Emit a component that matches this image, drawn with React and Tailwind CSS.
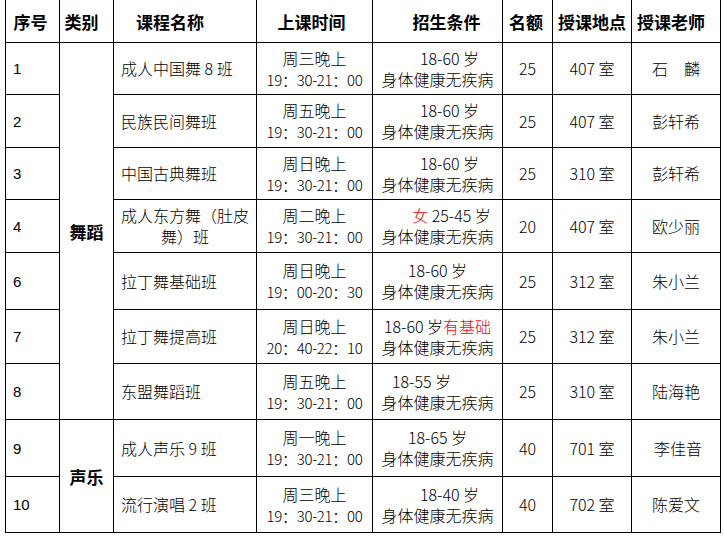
import React from "react";

const rows = [
  { no: "1", name: "成人中国舞 8 班", day: "周三晚上", time: "19：30-21：00", age: "18-60 岁", shift: "pl-[24px]", n: "25", room: "407 室", teacher: "石　麟", h: "h-[52px]" },
  { no: "2", name: "民族民间舞班", day: "周五晚上", time: "19：30-21：00", age: "18-60 岁", shift: "pl-[24px]", n: "25", room: "407 室", teacher: "彭轩希", h: "h-[53px]" },
  { no: "3", name: "中国古典舞班", day: "周日晚上", time: "19：30-21：00", age: "18-60 岁", shift: "pl-[24px]", n: "25", room: "310 室", teacher: "彭轩希", h: "h-[52px]" },
  { no: "4", name: "成人东方舞（肚皮舞）班", center: true, day: "周二晚上", time: "19：30-21：00", red: "女", age: " 25-45 岁", shift: "pl-[28px]", n: "20", room: "407 室", teacher: "欧少丽", h: "h-[53px]" },
  { no: "6", name: "拉丁舞基础班", day: "周日晚上", time: "19：00-20：30", age: "18-60 岁", shift: "", n: "25", room: "312 室", teacher: "朱小兰", h: "h-[57px]" },
  { no: "7", name: "拉丁舞提高班", day: "周日晚上", time: "20：40-22：10", age: "18-60 岁", after: "有基础", shift: "", n: "25", room: "312 室", teacher: "朱小兰", h: "h-[54px]" },
  { no: "8", name: "东盟舞蹈班", day: "周五晚上", time: "19：30-21：00", age: "18-55 岁", shift: "pr-[32px]", n: "25", room: "310 室", teacher: "陆海艳", h: "h-[56px]" },
  { no: "9", name: "成人声乐 9 班", day: "周一晚上", time: "19：30-21：00", age: "18-65 岁", shift: "", n: "40", room: "701 室", teacher: "李佳音", h: "h-[57px]" },
  { no: "10", name: "流行演唱 2 班", day: "周三晚上", time: "19：30-21：00", age: "18-40 岁", shift: "pl-[24px]", n: "40", room: "702 室", teacher: "陈爱文", h: "h-[56px]" },
];

const cell = "border border-black align-middle p-0";

export default function App() {
  return (
    <div className="bg-white w-[724px] h-[537px] overflow-hidden pl-[5px] text-black" style={{ fontFamily: '"Noto Sans CJK SC", sans-serif' }}>
      <table className="table-fixed border-collapse w-[716px] -mt-[1px] text-[16px] leading-[21px] font-light">
        <colgroup>
          <col className="w-[54px]" />
          <col className="w-[54px]" />
          <col className="w-[143px]" />
          <col className="w-[116px]" />
          <col className="w-[130px]" />
          <col className="w-[50px]" />
          <col className="w-[79px]" />
          <col className="w-[89px]" />
        </colgroup>
        <thead>
          <tr className="h-[43px] font-bold text-[17px]">
            <th className={`${cell} pr-[4px]`}>序号</th>
            <th className={`${cell} pr-[10px]`}>类别</th>
            <th className={`${cell} text-left pl-[22px]`}>课程名称</th>
            <th className={`${cell} pr-[6px]`}>上课时间</th>
            <th className={`${cell} pl-[18px]`}>招生条件</th>
            <th className={`${cell} pr-[3px]`}>名额</th>
            <th className={cell}>授课地点</th>
            <th className={`${cell} pr-[10px]`}>授课老师</th>
          </tr>
        </thead>
        <tbody>
          {rows.map((r, i) => (
            <tr key={r.no} className={r.h}>
              <td className={`${cell} pl-[7px] text-[15px] font-normal`} style={{ fontFamily: '"Liberation Sans", Arial, sans-serif' }}>
                {r.no}
              </td>
              {i === 0 && (
                <td rowSpan={7} className={`${cell} text-center font-bold text-[17px]`}>舞蹈</td>
              )}
              {i === 7 && (
                <td rowSpan={2} className={`${cell} text-center font-bold text-[17px]`}>声乐</td>
              )}
              <td className={`${cell} px-[7px] ${r.center ? "text-center" : "text-left"}`}>{r.name}</td>
              <td className={`${cell} text-center`}>
                <div>{r.day}</div>
                <div className="text-[15px] tracking-[-0.3px] whitespace-nowrap">{r.time}</div>
              </td>
              <td className={`${cell} text-center`}>
                <div className={`${r.shift} whitespace-nowrap`}>
                  {r.red && <span className="text-[#ff0000]">{r.red}</span>}
                  {r.age}
                  {r.after && <span className="text-[#ff0000]">{r.after}</span>}
                </div>
                <div>身体健康无疾病</div>
              </td>
              <td className={`${cell} text-center`}>{r.n}</td>
              <td className={`${cell} text-center`}>{r.room}</td>
              <td className={`${cell} text-center ${r.no === "9" ? "pl-[4px]" : ""}`}>{r.teacher}</td>
            </tr>
          ))}
        </tbody>
      </table>
    </div>
  );
}
